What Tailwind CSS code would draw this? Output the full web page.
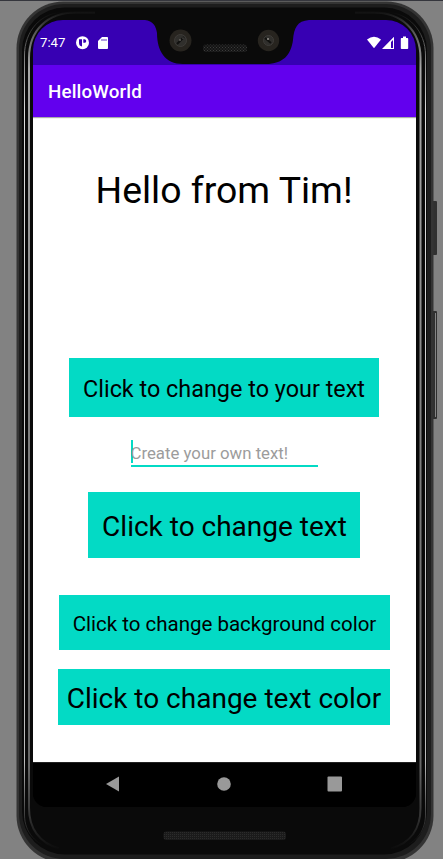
<!DOCTYPE html>
<html lang="en">
<head>
<meta charset="utf-8">
<meta name="viewport" content="width=device-width">
<title>HelloWorld</title>
<script src="https://cdn.jsdelivr.net/npm/@tailwindcss/browser@4"></script>
</head>
<body class="relative h-[859px] w-[443px] overflow-hidden bg-[#828282] font-['Roboto',sans-serif] text-black antialiased">
<!-- device frame -->
<svg class="absolute left-0 top-0" width="443" height="859" viewBox="0 0 443 859" fill="none">
  <defs>
    <linearGradient id="rim" x1="0" y1="10" x2="0" y2="850" gradientUnits="userSpaceOnUse">
      <stop offset="0" stop-color="#0a0a0a"/><stop offset=".025" stop-color="#555"/><stop offset=".07" stop-color="#aaa"/><stop offset=".5" stop-color="#808080"/><stop offset=".9" stop-color="#666"/><stop offset=".96" stop-color="#333"/><stop offset="1" stop-color="#0a0a0a"/>
    </linearGradient>
    <linearGradient id="edge" x1="0" y1="12" x2="0" y2="845" gradientUnits="userSpaceOnUse">
      <stop offset="0" stop-color="#0a0a0a"/><stop offset=".06" stop-color="#888"/><stop offset=".12" stop-color="#ddd"/><stop offset=".9" stop-color="#bbb"/><stop offset=".96" stop-color="#444"/><stop offset="1" stop-color="#0a0a0a"/>
    </linearGradient>
    <pattern id="mesh" width="3" height="3" patternUnits="userSpaceOnUse"><rect width="3" height="3" fill="#141414"/><path d="M0 0h1v1H0zM1.500 1.500h1v1h-1z" fill="#3c3c3c"/></pattern>
    <pattern id="mesh2" width="2" height="2" patternUnits="userSpaceOnUse"><rect width="2" height="2" fill="#1b1b1b"/><path d="M0 0h1v1H0z" fill="#2c2c2c"/></pattern>
  </defs>
  <path d="M0 .5h443" stroke="#35363d"/>
  <rect x="432" y="201" width="5" height="54" rx="1" fill="#303030"/>
  <rect x="432" y="311" width="5" height="108" rx="1" fill="#303030"/>
  <path d="M435.500 313v104" stroke="#858585"/>
  <rect x="16.500" y="1.500" width="417" height="861" rx="47" fill="#343434"/>
  <rect x="19" y="4" width="412" height="855" rx="45" fill="#1d1d1d"/>
  <rect x="22" y="7.500" width="405" height="847" rx="43" fill="#0a0a0a"/>
  <path d="M65 12C40 12 24.500 32 24.500 55V815C24.500 832 36 846 55 849M385 12C409 12 425.500 32 425.500 55V815C425.500 832 414 846 395 849" stroke="url(#edge)"/>
  <path d="M95 12.500H75C48 12.500 29 30 29 58V808C29 828 39 843 59 848.500M355 12.500H374C401 12.500 420.500 30 420.500 58V808C420.500 828 411 843 391 848.500" stroke="url(#rim)" stroke-width="2"/>
  <rect x="163.500" y="831.500" width="122.500" height="8.500" rx="3" fill="url(#mesh2)"/>
</svg>

<div class="relative ml-[33px] mt-5 flex h-[787px] w-[383px] flex-col overflow-hidden rounded-[30px_30px_14px_14px] bg-black">
  <!-- status bar -->
  <div class="relative flex h-[45px] shrink-0 items-center bg-[#3700b3] pl-[7px] pr-[7px] text-white">
    <svg class="absolute left-0 top-0" width="383" height="45" viewBox="0 0 383 45">
      <path d="M108 0H112C120 1 123 6 124 13C124 31 132 44 150 44H233C250 44 258 35 260 20C261 8 264 1 276 0Z" fill="#0a0a0a"/>
      <g fill="#27241f"><circle cx="147.500" cy="20.500" r="11"/><circle cx="235.500" cy="20.500" r="10.700"/></g>
      <g fill="#302f2c" stroke="#3e3c39"><circle cx="147.500" cy="20.500" r="6"/><circle cx="235.500" cy="20.500" r="5"/></g>
      <g stroke="#11110f" stroke-width="2"><path d="M144 24l7-7M232 18l6 5"/></g>
      <g fill="#96938c"><circle cx="147" cy="20" r=".8"/><circle cx="235" cy="19" r="1"/><circle cx="150" cy="18" r=".6"/></g>
      <rect x="170" y="24.500" width="44" height="7.500" rx="3" fill="url(#mesh)"/>
    </svg>
    <span class="relative mt-px text-[13.2px] leading-none">7:47</span>
    <svg class="relative ml-[11px] mt-px" width="33" height="14" viewBox="0 0 33 14">
      <circle cx="6.500" cy="6.700" r="6.500" fill="#fff"/>
      <path d="M3 3.200H6V10.500Q3 10 3 7ZM7.300 3.200H8.500C10.800 3.400 10.800 6.800 8.500 6.800H7.300Z" fill="#3700b3"/>
      <path d="M26 1H31.200Q32 1 32 1.900V12.100Q32 13 31.200 13H23Q22 13 22 12.100V5Z" fill="#fff"/>
      <path d="M26 3v2M28 3v2M30 3v2" stroke="#3700b3" stroke-width=".8"/>
    </svg>
    <svg class="relative ml-auto" width="42" height="14" viewBox="0 0 42 14" fill="#fff">
      <path d="M0 3.500Q7 -1.800 14 3.500L7 12.300Z"/>
      <path fill-rule="evenodd" d="M27 .8V13H15ZM26 4L24 6V12H26Z"/>
      <path d="M36 .5h3V2h1.400q.8 0 .8.800v9.400q0 .8-.8.800h-5.800q-.8 0-.8-.8V2.800q0-.8.800-.8h1.400z"/>
    </svg>
  </div>
  <!-- app bar -->
  <header class="relative flex h-[52px] shrink-0 items-center bg-[#6200ee] pl-[15px] shadow-[0_1px_1px_#aaa]">
    <h1 class="mt-[3px] text-[18.8px] font-medium leading-none tracking-[0.15px] text-white">HelloWorld</h1>
  </header>
  <!-- content -->
  <main class="flex h-[645px] shrink-0 flex-col items-center bg-white pr-px">
    <p class="mt-[51px] h-[44px] whitespace-nowrap text-[37.4px] leading-[44px]">Hello from Tim!</p>
    <button class="mt-[146px] flex h-[59px] w-[310px] shrink-0 items-center justify-center whitespace-nowrap bg-[#03dac5] pt-[5px] text-[23.4px] leading-none">Click to change to your text</button>
    <div class="mt-[23px] flex h-[27px] w-[187px] shrink-0 border-b-2 border-[#03dac5]">
      <span class="h-[23px] w-[2px] shrink-0 bg-[#03dac5]"></span>
      <span class="-ml-[2px] whitespace-nowrap text-[16.8px] leading-[26px] text-[#9c9c9c]">Create your own text!</span>
    </div>
    <button class="mt-[25px] flex h-[66px] w-[272px] shrink-0 items-center justify-center whitespace-nowrap bg-[#03dac5] pl-px pt-[3px] text-[28px] leading-none">Click to change text</button>
    <button class="mt-[37px] flex h-[55px] w-[331px] shrink-0 items-center justify-center whitespace-nowrap bg-[#03dac5] pl-px pt-[3px] text-[20.5px] leading-none">Click to change background color</button>
    <button class="mt-[19px] flex h-[56px] w-[332px] shrink-0 items-center justify-center whitespace-nowrap bg-[#03dac5] pt-[3px] text-[28px] leading-none">Click to change text color</button>
  </main>
  <!-- navigation bar -->
  <nav class="flex h-[45px] shrink-0 items-center border-t border-[#222] bg-black pl-[72px]">
    <svg class="-mt-[2px]" width="240" height="18" viewBox="0 0 240 18" fill="#999"><path d="M14 1.500V16.500L1 9ZM"/><circle cx="119" cy="9" r="6.800"/><rect x="222.500" y="1.500" width="14.500" height="15" rx="1"/></svg>
  </nav>
</div>
</body>
</html>
